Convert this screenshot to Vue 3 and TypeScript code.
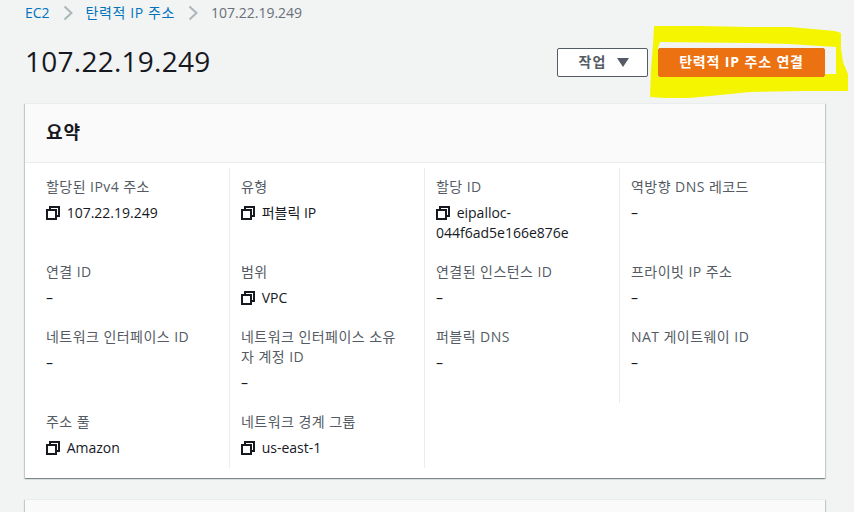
<script setup lang="ts">
interface Field {
  label: string
  value?: string
  copy?: boolean
}

const fields: Field[] = [
  { label: '할당된 IPv4 주소', value: '107.22.19.249', copy: true },
  { label: '유형', value: '퍼블릭 IP', copy: true },
  { label: '할당 ID', value: 'eipalloc-044f6ad5e166e876e', copy: true },
  { label: '역방향 DNS 레코드' },
  { label: '연결 ID' },
  { label: '범위', value: 'VPC', copy: true },
  { label: '연결된 인스턴스 ID' },
  { label: '프라이빗 IP 주소' },
  { label: '네트워크 인터페이스 ID' },
  { label: '네트워크 인터페이스 소유자 계정 ID' },
  { label: '퍼블릭 DNS' },
  { label: 'NAT 게이트웨이 ID' },
  { label: '주소 풀', value: 'Amazon', copy: true },
  { label: '네트워크 경계 그룹', value: 'us-east-1', copy: true },
  { label: '' },
]
</script>

<template>
  <div class="page">
    <nav class="crumbs">
      <a>EC2</a>
      <svg class="chevron" viewBox="0 0 10 16"><path d="M1.5 1.5 8.5 8l-7 6.5" /></svg>
      <a class="wide">탄력적 IP 주소</a>
      <svg class="chevron" viewBox="0 0 10 16"><path d="M1.5 1.5 8.5 8l-7 6.5" /></svg>
      <span>107.22.19.249</span>
    </nav>

    <header class="head">
      <h1>107.22.19.249</h1>
      <div class="actions">
        <button class="btn action"><span class="btn-text">작업</span><i class="caret"></i></button>
        <button class="btn primary">탄력적 IP 주소 연결</button>
      </div>
    </header>

    <section class="card">
      <h2 class="card-title">요약</h2>
      <div class="grid">
        <div v-for="(f, i) in fields" :key="i" class="cell">
          <template v-if="f.label">
            <div class="label">{{ f.label }}</div>
            <div class="value">
              <svg v-if="f.copy" class="copy" viewBox="0 0 14 14">
                <path d="M4 4V1h9v9h-3" />
                <rect x="1" y="4" width="9" height="9" />
              </svg>
              {{ f.value ?? '–' }}
            </div>
          </template>
        </div>
      </div>
    </section>

    <section class="card next"></section>

    <!-- yellow marker scribble drawn on top of the screenshot -->
    <svg class="marker" viewBox="0 0 854 512">
      <path
        fill-rule="evenodd"
        d="M654 26 700 26 750 27 790 27 835 31 841 33 841 48 843 62 848 74 848 91 800 91 750 92 690 98 665 98 650 97 651 70 653 45ZM660 42 750 43 790 44 836 47 836 74 825 74 825 77 658 77 658 48Z"
      />
    </svg>
  </div>
</template>

<style scoped>
.page {
  position: relative;
  height: 512px;
  box-sizing: border-box;
  padding: 0 29px 0 25px;
  overflow: hidden;
  background: #f2f3f3;
  color: #16191f;
  font-family: "Open Sans", "Noto Sans CJK KR", sans-serif;
  font-size: 14px;
  line-height: 20px;
}

.crumbs {
  display: flex;
  align-items: center;
  gap: 13px;
  height: 26px;
  color: #687078;
}

.crumbs a {
  color: #0073bb;
}

.crumbs .wide {
  letter-spacing: 0.6px;
}

.chevron {
  width: 10px;
  height: 16px;
  fill: none;
  stroke: #aab7b8;
  stroke-width: 2;
}

.head {
  display: flex;
  align-items: center;
  justify-content: space-between;
  height: 72px;
  margin-bottom: 5px;
}

.head h1 {
  margin: 0 0 2px;
  font-size: 28px;
  font-weight: 400;
  line-height: 36px;
  letter-spacing: 0.25px;
}

.actions {
  display: flex;
  gap: 10px;
}

.btn {
  display: flex;
  align-items: center;
  justify-content: center;
  gap: 11px;
  width: 91px;
  height: 29px;
  padding: 0;
  border: 1px solid #545b64;
  border-radius: 2px;
  background: #fff;
  color: #545b64;
  font: inherit;
  font-weight: 600;
}

.action {
  padding-left: 3px;
}

.btn-text {
  letter-spacing: 1px;
}

.primary {
  width: 167px;
  border-color: #ec7211;
  background: #ec7211;
  color: #fff;
  font-weight: 700;
  letter-spacing: 0.85px;
}

.caret {
  border-top: 9px solid #545b64;
  border-left: 6.5px solid transparent;
  border-right: 6.5px solid transparent;
}

.card {
  background: #fff;
  border-top: 1px solid #eaeded;
  box-shadow:
    0 1px 1px 0 rgba(0, 28, 36, 0.3),
    1px 1px 1px 0 rgba(0, 28, 36, 0.15),
    -1px 1px 1px 0 rgba(0, 28, 36, 0.15);
}

.card-title {
  margin: 0;
  padding: 0 21px;
  height: 58px;
  background: #fafafa;
  border-bottom: 1px solid #eaeded;
  font-size: 18px;
  font-weight: 700;
  line-height: 56px;
  letter-spacing: 1px;
}

.grid {
  display: grid;
  grid-template-columns: repeat(4, 195px);
  padding: 5px 0 10px 9px;
}

.cell {
  box-sizing: border-box;
  padding: 9px 18px 10px 11px;
  border-left: 1px solid #eaeded;
}

.cell:nth-child(4n + 1) {
  border-left-color: transparent;
}

.cell:nth-child(15) {
  border-left-color: #eaeded;
}

.label {
  margin-bottom: 6px;
  color: #545b64;
  letter-spacing: 0.45px;
  word-break: break-all;
}

.value {
  word-break: normal;
}

.copy {
  width: 14px;
  height: 14px;
  margin-right: 3px;
  vertical-align: -2px;
  fill: none;
  stroke: #16191f;
  stroke-width: 2;
}

.next {
  height: 40px;
  margin-top: 21px;
  background: #fafafa;
}

.marker {
  position: absolute;
  inset: 0;
  width: 854px;
  height: 512px;
  fill: #f5f500;
  pointer-events: none;
}
</style>

<style>
html,
body {
  margin: 0;
  overflow: hidden;
}
</style>
